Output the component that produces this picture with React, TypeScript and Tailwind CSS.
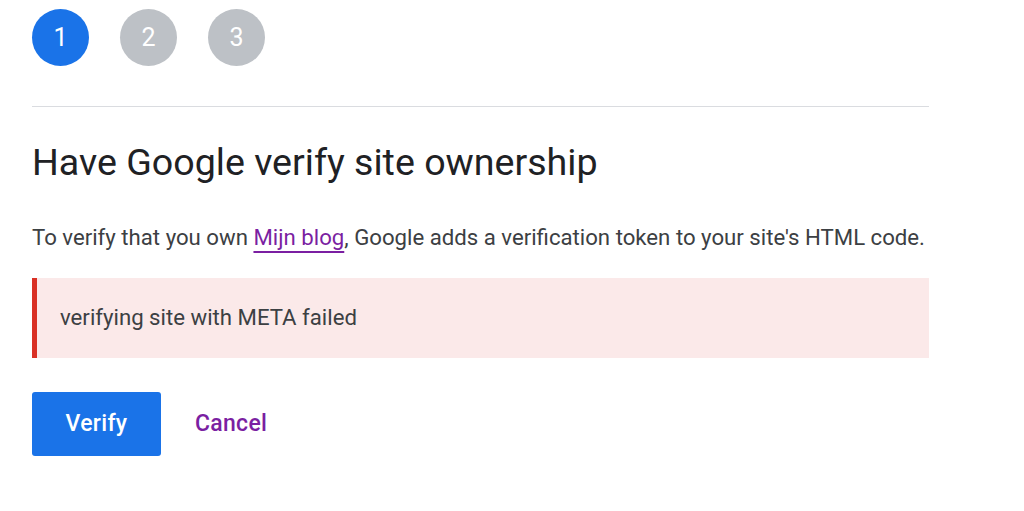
export default function App() {
  const steps = [1, 2, 3];
  return (
    <div className="min-h-screen bg-white text-[#202124]" style={{ fontFamily: 'Roboto, "Noto Sans", sans-serif' }}>
      <div className="w-[897px] ml-[32px] pt-[9px]">
        {/* Stepper */}
        <div className="flex gap-[31px]">
          {steps.map((s) => (
            <div
              key={s}
              className={
                s === 1
                  ? 'w-[57px] h-[57px] rounded-full bg-[#1a73e8] text-white flex items-center justify-center text-[25px]'
                  : 'w-[57px] h-[57px] rounded-full bg-[#bdc1c6] text-white flex items-center justify-center text-[25px]'
              }
            >
              {s}
            </div>
          ))}
        </div>

        <div className="mt-[40px] h-px bg-[#dadce0]" />

        <h1 className="mt-[32px] text-[37.6px] leading-[46px] font-normal text-[#202124]">
          Have Google verify site ownership
        </h1>

        <p className="mt-[37px] text-[22.2px] leading-[30px] text-[#3c4043] whitespace-nowrap">
          To verify that you own{' '}
          <a className="text-[#7b1fa2] underline underline-offset-[6px] decoration-[1.5px]">Mijn blog</a>, Google adds a
          verification token to your site's HTML code.
        </p>

        <div className="mt-[26px] h-[80px] bg-[#fbe9e9] border-l-[5px] border-[#d93025] flex items-center pl-[23px] text-[22.2px] text-[#3c4043]">
          verifying site with META failed
        </div>

        <div className="mt-[34px] flex items-center gap-[34px]">
          <button className="w-[129px] h-[64px] rounded-[3px] bg-[#1a73e8] text-white text-[23px] font-medium tracking-[0.3px]">
            Verify
          </button>
          <button className="text-[#7b1fa2] text-[23px] font-medium tracking-[0.3px]">Cancel</button>
        </div>
      </div>
    </div>
  );
}
